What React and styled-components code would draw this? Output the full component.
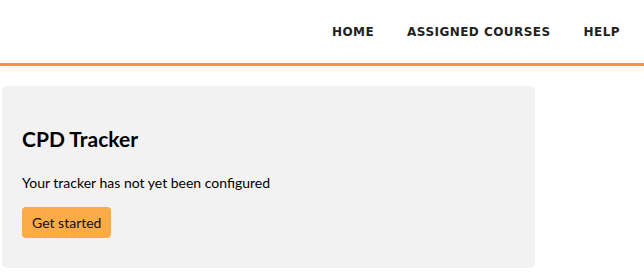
import styled, { createGlobalStyle } from "styled-components";

const GlobalStyle = createGlobalStyle`
  html, body {
    margin: 0;
    padding: 0;
    background: #fff;
    font-family: Lato, "Open Sans", sans-serif;
  }
`;

const Header = styled.header`
  display: flex;
  justify-content: flex-end;
  align-items: center;
  height: 63px;
  padding-right: 24px;
  border-bottom: 3px solid #ff8f40;
  box-shadow: 0 2px 4px rgba(0, 0, 0, 0.06);
`;

const Nav = styled.nav`
  display: flex;
  gap: 33px;
`;

const NavLink = styled.a`
  font-family: "DejaVu Sans", Verdana, sans-serif;
  font-weight: bold;
  font-size: 12px;
  letter-spacing: 0.45px;
  color: #222;
  text-decoration: none;
  cursor: pointer;
`;

const Card = styled.section`
  box-sizing: border-box;
  width: 533px;
  height: 182px;
  margin: 20px 0 0 2px;
  padding: 41px 20px 0 20px;
  background: #f2f2f2;
  border-radius: 5px;
`;

const Title = styled.h2`
  margin: 0;
  font-size: 21px;
  line-height: 24px;
  font-weight: 700;
  color: #000;
`;

const Text = styled.p`
  margin: 23px 0 0 0;
  font-size: 14px;
  line-height: 17px;
  color: #000;
`;

const Button = styled.button`
  display: block;
  margin-top: 16px;
  height: 31px;
  padding: 0 10px;
  border: none;
  border-radius: 4px;
  background: #fdaa48;
  color: #111;
  font-family: Lato, sans-serif;
  font-size: 14px;
  cursor: pointer;
`;

export default function App() {
  return (
    <>
      <GlobalStyle />
      <Header>
        <Nav>
          <NavLink>HOME</NavLink>
          <NavLink>ASSIGNED COURSES</NavLink>
          <NavLink>HELP</NavLink>
        </Nav>
      </Header>
      <Card>
        <Title>CPD Tracker</Title>
        <Text>Your tracker has not yet been configured</Text>
        <Button>Get started</Button>
      </Card>
    </>
  );
}
